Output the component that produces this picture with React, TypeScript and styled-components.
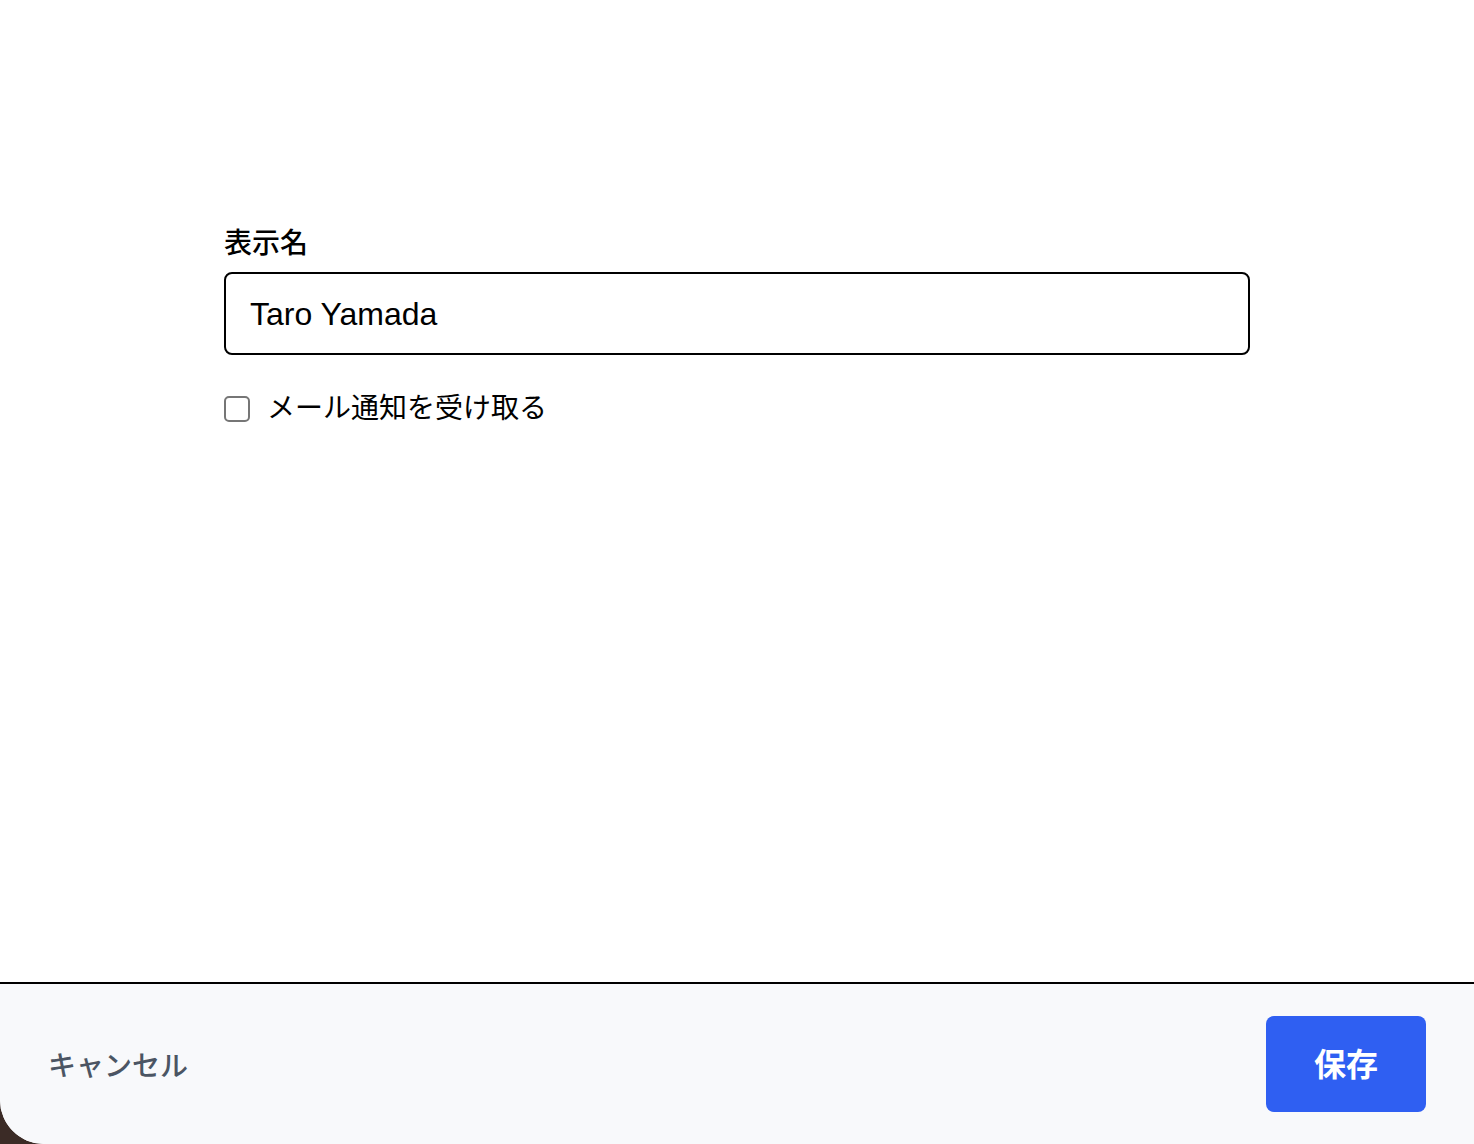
import React, { useState } from 'react'
import styled, { createGlobalStyle } from 'styled-components'

const GlobalStyle = createGlobalStyle`
  html, body {
    margin: 0;
    padding: 0;
    height: 100%;
    background: #3b2b26;
  }
  #root {
    height: 100%;
  }
  * {
    box-sizing: border-box;
  }
`

const Window = styled.div`
  height: 1144px;
  display: flex;
  flex-direction: column;
  background: #ffffff;
  border-bottom-left-radius: 44px;
  overflow: hidden;
  font-family: "Liberation Sans", "Noto Sans CJK JP", sans-serif;
  color: #000;
`

const Main = styled.main`
  flex: 1;
  display: flex;
  justify-content: center;
  padding-top: 224px;
`

const Form = styled.div`
  width: 1026px;
  display: flex;
  flex-direction: column;
`

const Label = styled.label`
  font-size: 28px;
  line-height: 40px;
  font-weight: 500;
  margin-bottom: 8px;
`

const TextInput = styled.input`
  height: 83px;
  width: 100%;
  border: 2px solid #000;
  border-radius: 8px;
  padding: 2px 24px 0 24px;
  font-family: inherit;
  font-size: 32px;
  color: #000;
  background: #fff;
  outline: none;
`

const CheckRow = styled.label`
  display: flex;
  align-items: center;
  gap: 17px;
  margin-top: 30px;
  font-size: 28px;
  line-height: 48px;
  cursor: pointer;
`

const Box = styled.input`
  appearance: none;
  margin: 0;
  width: 26px;
  height: 26px;
  border: 2px solid #767676;
  border-radius: 5px;
  background: #fff;
  &:checked {
    background: #2f5ff2;
    border-color: #2f5ff2;
  }
`

const Footer = styled.footer`
  height: 162px;
  flex-shrink: 0;
  border-top: 2px solid #000;
  background: #f8f9fb;
  display: flex;
  align-items: center;
  justify-content: space-between;
  padding: 0 48px;
`

const Button = styled.button<{ primary?: boolean }>`
  border: none;
  font-family: inherit;
  cursor: pointer;
  font-size: ${props => props.primary ? '32px' : '28px'};
  font-weight: ${props => props.primary ? 700 : 500};
  color: ${props => props.primary ? '#ffffff' : '#4b5563'};
  background: ${props => props.primary ? '#2f5ff2' : 'transparent'};
  border-radius: 8px;
  padding: ${props => props.primary ? '0 0 4px 0' : '0'};
  height: ${props => props.primary ? '96px' : 'auto'};
  width: ${props => props.primary ? '160px' : 'auto'};
`

function App() {
  const [name, setName] = useState('Taro Yamada')
  const [mail, setMail] = useState(false)

  return (
    <>
      <GlobalStyle />
      <Window>
        <Main>
          <Form>
            <Label htmlFor="display-name">表示名</Label>
            <TextInput id="display-name" value={name} onChange={e => setName(e.target.value)} />
            <CheckRow>
              <Box type="checkbox" checked={mail} onChange={e => setMail(e.target.checked)} />
              メール通知を受け取る
            </CheckRow>
          </Form>
        </Main>
        <Footer>
          <Button>キャンセル</Button>
          <Button primary>保存</Button>
        </Footer>
      </Window>
    </>
  )
}

export default App
